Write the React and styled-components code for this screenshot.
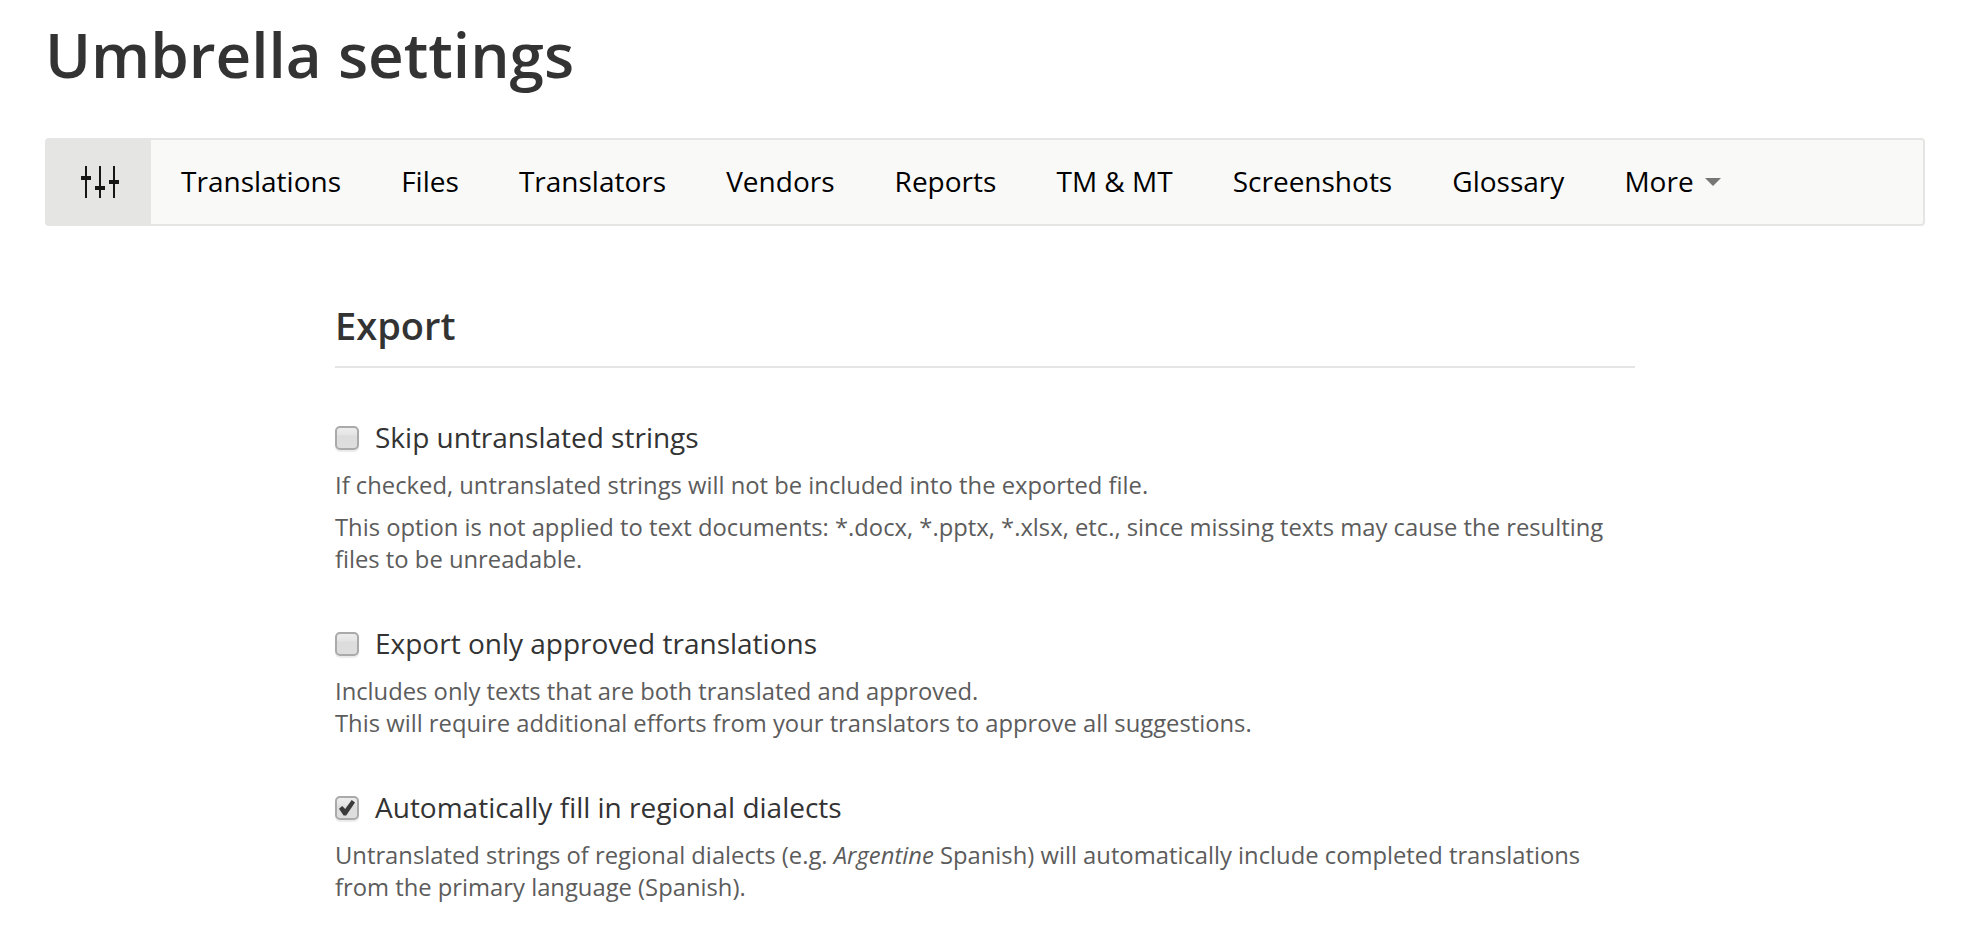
import React from "react";
import styled, { createGlobalStyle } from "styled-components";

const Global = createGlobalStyle`
  * { box-sizing: border-box; }
  body { margin: 0; background: #fff; color: #2b2b2b; font-family: "Open Sans", sans-serif; overflow: hidden; }
`;
const Page = styled.div`padding: 12px 47px 0 45px; height: 928px; overflow: hidden;`;
const Title = styled.h1`margin: 0; font-size: 62px; line-height: 85px; font-weight: 600; color: #333; white-space: nowrap;`;
const Nav = styled.nav`margin-top: 41px; height: 88px; display: flex; border: 2px solid #e5e5e3; border-radius: 4px; background: #f9f9f8;`;
const SettingsTab = styled.div`width: 104px; padding-left: 2px; display: flex; align-items: center; justify-content: center; background: #e5e5e3;`;
const Tab = styled.div`display: flex; align-items: center; padding: 0 30.06px 2px; font-size: 28px; color: #000; white-space: nowrap;`;
const Caret = styled.span`margin: 2px 0 0 11px; border: 8px solid transparent; border-top-color: #777; border-bottom: 0;`;
const Content = styled.main`width: 1300px; margin: 75px 0 0 290px;`;
const Heading = styled.h2`margin: 0; height: 67px; border-bottom: 2px solid #e5e5e5; font-size: 38px; line-height: 48px; font-weight: 600; color: #333;`;
const OptionSection = styled.section`margin-top: ${(p) => p.$gap}px;`;
const Label = styled.label`display: flex; align-items: center; height: 40px; font-size: 28px; color: #333;`;
const LabelText = styled.span`padding-bottom: 2px;`;
const Box = styled.span`
  width: 24px; height: 24px; margin-right: 16px; display: flex;
  border: 2px solid #aaa; border-radius: 5px;
  background: linear-gradient(#ededed 0%, #e4e4e4 35%, #dcdcdc 40%, #dedede 100%);
  box-shadow: 0 2px 1px rgba(0, 0, 0, 0.08);
`;
const Text = styled.p`margin: ${(p) => p.$top}px 0 0; font-size: 23.79px; line-height: 32px; color: #5c5c5c; white-space: nowrap;`;

const tabs = ["Translations", "Files", "Translators", "Vendors", "Reports", "TM & MT", "Screenshots", "Glossary"];

const SlidersIcon = () => (
  <svg width="38" height="32" viewBox="0 0 38 32" fill="#161616" shapeRendering="crispEdges">
    <rect x="4" width="2" height="32" />
    <rect x="18" width="2" height="32" />
    <rect x="32" width="2" height="32" />
    <rect y="10" width="10" height="4" />
    <rect x="14" y="20" width="10" height="4" />
    <rect x="28" y="14" width="10" height="4" />
  </svg>
);

const Option = ({ gap, checked, label, children }) => (
  <OptionSection $gap={gap}>
    <Label>
      <Box>
        {checked && (
          <svg width="20" height="20" viewBox="0 0 20 20">
            <path d="M14.7 2 18 4.6 9.2 17.6H6.6L2 10.8 5.2 8 8.2 11Z" fill="#3a3a3a" />
          </svg>
        )}
      </Box>
      <LabelText>{label}</LabelText>
    </Label>
    {children}
  </OptionSection>
);

export default function App() {
  return (
    <Page>
      <Global />
      <Title>Umbrella settings</Title>
      <Nav>
        <SettingsTab><SlidersIcon /></SettingsTab>
        {tabs.map((t) => <Tab key={t}>{t}</Tab>)}
        <Tab>More<Caret /></Tab>
      </Nav>
      <Content>
        <Heading>Export</Heading>
        <Option gap={50} label="Skip untranslated strings">
          <Text $top={11}>If checked, untranslated strings will not be included into the exported file.</Text>
          <Text $top={10}>This option is not applied to text documents: *.docx, *.pptx, *.xlsx, etc., since missing texts may cause the resulting<br />files to be unreadable.</Text>
        </Option>
        <Option gap={49} label="Export only approved translations">
          <Text $top={11}>Includes only texts that are both translated and approved.<br />This will require additional efforts from your translators to approve all suggestions.</Text>
        </Option>
        <Option gap={49} checked label="Automatically fill in regional dialects">
          <Text $top={11}>Untranslated strings of regional dialects (e.g. <em>Argentine</em> Spanish) will automatically include completed translations<br />from the primary language (Spanish).</Text>
        </Option>
      </Content>
    </Page>
  );
}
